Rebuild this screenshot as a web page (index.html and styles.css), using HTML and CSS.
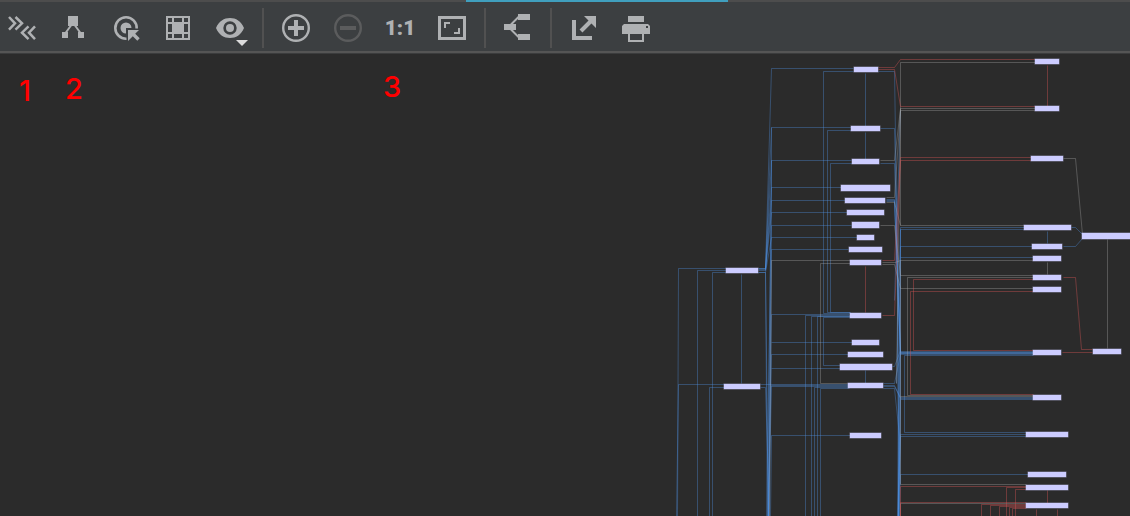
FILE: index.html
```html
<!DOCTYPE html>
<html lang="en">
<head>
<meta charset="utf-8">
<title>Diagram</title>
<link rel="stylesheet" href="styles.css">
</head>
<body>
<div class="tab-strip"><div class="tab-active"></div></div>
<header class="toolbar">
  <button class="tool" aria-label="Collapse"><svg viewBox="0 0 40 40"><path class="line" stroke-width="2.500" d="M7 9l6 6.300-6 6.300M13.500 9l6.500 6.300-6.500 6.300M26.500 18.300l-6.500 6.400 6.500 6.400M33 18.300l-6 6.400 6 6.400"/></svg></button>
  <button class="tool" aria-label="Layout"><svg viewBox="0 0 40 40"><path d="M14 8h10v10H14zM8 24h6v6H8zM24 24h6v6h-6z"/><path class="line" stroke-width="2" d="M17 17.500L11.500 25M21 17.500L26.500 25"/></svg></button>
  <button class="tool" aria-label="Select source"><svg viewBox="0 0 40 40"><path class="line" stroke-width="2.600" d="M20.500 30.700A10.700 10.700 0 1 1 30.700 20.500"/><path d="M20 25.500A5.500 5.500 0 1 1 25.500 20H20zM22 22h11l-3.800 3.800 4.500 4.500-2.400 2.400-4.500-4.500L22 33z"/></svg></button>
  <button class="tool" aria-label="Show grid"><svg viewBox="0 0 40 40"><path fill-rule="evenodd" d="M8 8h24v24H8zM10 10v4h4v-4zM16 10v4h8v-4zM26 10v4h4v-4zM10 16v8h4v-8zM26 16v8h4v-8zM10 26v4h4v-4zM16 26v4h8v-4zM26 26v4h4v-4z"/></svg></button>
  <button class="tool" aria-label="Visibility"><svg viewBox="0 0 40 40"><path fill-rule="evenodd" d="M6 20C9 13 14 10 20 10S31 13 34 20C31 27 26 30 20 30S9 27 6 20zM20 13.300a6.700 6.700 0 1 0 0 13.400a6.700 6.700 0 0 0 0-13.400z"/><circle cx="20" cy="20" r="4"/><path class="caret" d="M26 32h12l-6 6z"/></svg></button>
  <span class="sep"></span>
  <button class="tool" aria-label="Zoom in"><svg viewBox="0 0 40 40"><circle class="line" cx="20" cy="20" r="12.800" stroke-width="2.400"/><path d="M12 18h6v-6h4v6h6v4h-6v6h-4v-6h-6z"/></svg></button>
  <button class="tool" aria-label="Zoom out" disabled><svg viewBox="0 0 40 40"><circle class="line" cx="20" cy="20" r="12.800" stroke-width="2.400"/><path d="M12 18h16v4H12z"/></svg></button>
  <button class="tool actual">1:1</button>
  <button class="tool" aria-label="Fit content"><svg viewBox="0 0 40 40"><path class="line" stroke-width="3" d="M7.500 9.500h25v21h-25z"/><path class="line" stroke-width="2" d="M13 20v-5h5M27 20v5h-5"/></svg></button>
  <span class="sep"></span>
  <button class="tool" aria-label="Apply layout"><svg viewBox="0 0 40 40"><path d="M6 16h12v6H6zM20 6h12v6H20zM20 26h12v6H20z"/><path class="line" stroke-width="2" d="M13 16.500L20.500 9M13 21.500L20.500 29"/></svg></button>
  <span class="sep"></span>
  <button class="tool" aria-label="Export"><svg viewBox="0 0 40 40"><path d="M8 12h4v16h16v4H8zM20 8h12v12z"/><path class="line" stroke-width="4" d="M17 23L28 12"/></svg></button>
  <button class="tool" aria-label="Print"><svg viewBox="0 0 40 40"><path fill-rule="evenodd" d="M12 8h16v6H12zM8 16h24l2 2v8h-6v8H12v-8H6v-8zM14 26v6h12v-6zM30 18v2h2v-2z"/></svg></button>
</header>
<main class="canvas">
<svg class="diagram" role="img" aria-label="Dependency diagram">
<g transform="translate(0.500 -53.500)">
<g class="edges blue">
<path d="M726 268H678L677 516"/><path d="M726 270H697V516"/><path d="M726 272H712V516"/><path d="M741 274V383"/>
<path d="M724 384H678L676 516"/><path d="M724 387H709V516"/><path d="M760 387H765L769 516"/><path d="M760 384H849"/>
<path d="M758 268H765L771 68H853"/><path d="M758 268H765L771 127H851"/><path d="M758 269H765L771 160H851"/>
<path d="M765 269L771 187H841"/><path d="M758 270H765L771 200H845"/><path d="M765 270L771 212H847"/>
<path d="M771 225H851"/><path d="M758 272H765L771 237H857"/><path d="M771 249H848"/>
<path d="M758 272H765L768 516"/><path d="M765 272L767 516"/>
<path d="M771 127V200L766 516"/><path d="M771 160L767 516"/><path d="M771 225L768 516"/><path d="M771 249L768 516"/>
<path d="M849 314H771L768 516"/><path d="M852 342H771"/><path d="M848 354H771L768 516"/><path d="M840 368H771"/><path d="M849 385H771L768 516"/><path d="M849 386H771"/><path d="M850 435H771L770 516"/>
<path d="M853 71H823V313H850"/><path d="M851 130H827V312H850"/><path d="M852 163H830V312H850"/>
<path d="M850 315H805V516"/><path d="M850 316H811V516"/><path d="M850 316H817V516"/><path d="M850 317H823V365H840"/><path d="M849 387H814V516"/><path d="M849 388H820V516"/>
<path d="M865 73V126"/><path d="M865 132V159"/><path d="M865 370V383"/>
<path d="M878 71H894L896 200L899 516"/><path d="M880 128H894L897 250L898 516"/><path d="M880 163H894L900 351"/>
<path d="M886 199H894L900 352H1033"/><path d="M886 200H894L900 353H1033"/><path d="M886 201H894L900 354H1033"/><path d="M900 351H1033"/><path d="M900 352H1033"/><path d="M900 353H1033"/>
<path d="M900 229L897 516"/><path d="M900 110L894 300"/>
<path d="M1024 227H900L896 383"/><path d="M1024 229H900V352"/><path d="M1032 246H900L898 516"/><path d="M1033 257H900"/>
<path d="M892 366H894L900 350"/><path d="M883 383H894L900 354"/><path d="M883 385H894L900 397H1033"/><path d="M883 386H894L900 398H1033"/><path d="M883 388H894L899 436L898 516"/>
<path d="M1033 399H900L898 516"/><path d="M1033 355H904V432H1026"/><path d="M1026 434H900L898 516"/><path d="M1026 436H900L897 516"/><path d="M1028 474H900L899 516"/>
<path d="M900 352L898 516"/><path d="M900 353V484"/>
<path d="M1047 231V243"/><path d="M1071 227H1075L1082 234"/><path d="M1063 246H1075L1082 238"/>
</g>
<g class="edges gray">
<path d="M850 260H771L769 516"/><path d="M850 263H820V383H849"/>
<path d="M880 160H894L900 108H1035"/><path d="M886 197H894L900 110H1035"/><path d="M886 202H894L900 225"/>
<path d="M1035 62H900V225H1024"/><path d="M880 225H894L900 275H1033"/><path d="M882 262H895L900 260H1033"/><path d="M882 264H894L900 288H1033"/>
<path d="M1033 277H907V395H1033"/><path d="M1033 396H900V260"/><path d="M900 108L896 383"/><path d="M900 396V484H1026"/><path d="M1026 503H900V516"/>
<path d="M1047 262V274"/><path d="M1063 158H1075L1082 234"/><path d="M1107 239V348"/>
</g>
<g class="edges red">
<path d="M878 67H894L900 59H1035"/><path d="M878 69H894L900 106H1035"/><path d="M882 260H894L900 157H1031"/><path d="M882 315H894L900 160H1031"/>
<path d="M865 266V312"/><path d="M1047 65V106"/><path d="M1033 279H913V350H1033"/><path d="M1033 291H910V394H1033"/>
<path d="M1063 277H1075L1081 349H1092"/><path d="M1062 352H1092"/>
<path d="M1026 486H900V516"/><path d="M1026 487H1006V516"/><path d="M1026 489H1015V516"/><path d="M1026 502H900V516"/>
<path d="M1026 504H981V516"/><path d="M1026 505H990V516"/><path d="M1026 506H999V516"/><path d="M1026 507H1009V516"/><path d="M1026 508H1012V516"/>
<path d="M1047 490V503"/><path d="M1036 509V516"/><path d="M1057 509V516"/>
</g>
</g>
<g class="nodes" transform="translate(0 -54)">
<rect x="726" y="268" width="32" height="5"/><rect x="724" y="384" width="36" height="5"/>
<rect x="854" y="67" width="24" height="5"/><rect x="851" y="126" width="29" height="5"/><rect x="852" y="159" width="27" height="5"/><rect x="841" y="185" width="49" height="6"/><rect x="845" y="198" width="40" height="5"/><rect x="847" y="210" width="37" height="5"/><rect x="852" y="222" width="27" height="6"/><rect x="857" y="235" width="17" height="5"/><rect x="849" y="247" width="33" height="5"/><rect x="850" y="260" width="31" height="5"/><rect x="850" y="313" width="31" height="5"/><rect x="852" y="340" width="27" height="5"/><rect x="848" y="352" width="35" height="5"/><rect x="840" y="364" width="52" height="6"/><rect x="848" y="383" width="35" height="5"/><rect x="850" y="433" width="31" height="5"/>
<rect x="1035" y="59" width="24" height="5"/><rect x="1035" y="106" width="24" height="5"/><rect x="1031" y="156" width="32" height="5"/><rect x="1024" y="225" width="47" height="5"/><rect x="1032" y="244" width="30" height="5"/><rect x="1033" y="256" width="28" height="5"/><rect x="1033" y="275" width="28" height="5"/><rect x="1033" y="287" width="28" height="5"/><rect x="1033" y="350" width="28" height="5"/><rect x="1033" y="395" width="28" height="5"/><rect x="1026" y="432" width="42" height="5"/><rect x="1028" y="472" width="38" height="5"/><rect x="1026" y="485" width="42" height="5"/><rect x="1026" y="503" width="42" height="5"/>
<rect x="1082" y="233" width="60" height="6"/><rect x="1093" y="349" width="28" height="5"/>
</g>
</svg>
<span class="mark mark-1">1</span>
<span class="mark mark-2">2</span>
<span class="mark mark-3">3</span>
</main>
</body>
</html>
```
FILE: styles.css
```css
* { box-sizing: border-box; }
body {
  margin: 0;
  height: 100vh;
  display: flex;
  flex-direction: column;
  overflow: hidden;
  background: #2b2b2b;
  font-family: Roboto, "Liberation Sans", sans-serif;
}
.tab-strip {
  flex: none;
  display: grid;
  grid-template-columns: 466fr 262fr 402fr;
  height: 2px;
  background: #4d4d4d;
}
.tab-active { grid-column: 2; background: #409fbe; }
.toolbar {
  flex: none;
  display: flex;
  gap: 12px;
  padding: 6px 2px 3px;
  background: #3c3f41;
  border-bottom: 2px solid #555555;
}
.tool {
  width: 40px;
  height: 40px;
  flex: none;
  padding: 0;
  border: 0;
  background: none;
  color: #afb1b3;
}
.tool:disabled { color: #5b5c5d; }
.tool svg { display: block; width: 40px; height: 40px; fill: currentColor; }
.tool .line { fill: none; stroke: currentColor; }
.tool .caret { fill: #dcdcdc; }
.tool.actual { font: 900 21px/40px Roboto, "Liberation Sans", sans-serif; }
.sep { width: 2px; flex: none; background: #515151; }
.canvas {
  position: relative;
  flex: 1;
  min-height: 0;
  overflow: hidden;
  border-top: 1px solid #3b3c3d;
}
.diagram { position: absolute; inset: 0; width: 100%; height: 100%; }
.edges { fill: none; stroke-width: 1; }
.blue { stroke: #4f95ea; stroke-opacity: 0.35; }
.gray { stroke: #b4b4b4; stroke-opacity: 0.32; }
.red { stroke: #d85555; stroke-opacity: 0.4; }
.nodes { fill: #ccccff; stroke: #ccccff; stroke-opacity: 0.5; }
.mark {
  position: absolute;
  color: #ff0000;
  font: 500 29px/32px Inter, "Liberation Sans", sans-serif;
}
.mark-1 { left: 19px; top: 21px; }
.mark-2 { left: 65px; top: 19px; }
.mark-3 { left: 383px; top: 17px; }
```
